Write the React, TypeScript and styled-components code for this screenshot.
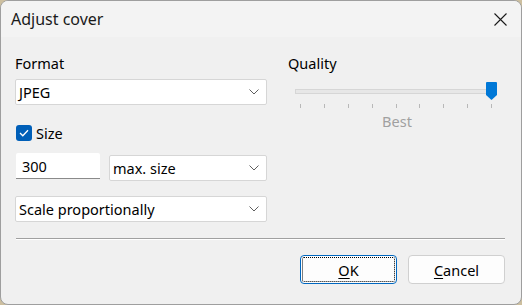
import React from "react";
import styled, { createGlobalStyle } from "styled-components";

const Global = createGlobalStyle`
  html, body { margin: 0; padding: 0; background: #cdbf9f; }
  body { font-family: "Noto Sans", "Open Sans", sans-serif; font-size: 14px; color: #000; }
  * { box-sizing: border-box; }
`;

const Window = styled.div`
  width: 522px;
  height: 305px;
  display: flex;
  flex-direction: column;
  background: #f0f0f0;
  border: 1px solid #9e9e9e;
  border-radius: 8px;
  overflow: hidden;
`;

const TitleBar = styled.div`
  height: 36px;
  flex: none;
  display: flex;
  align-items: center;
  justify-content: space-between;
  padding: 0 14px 0 10px;
  background: #f3f3f3;
`;

const Title = styled.div`
  font-size: 16px;
  color: #1a1a1a;
  margin-top: -1px;
`;

const Body = styled.div`
  flex: 1;
  display: flex;
  flex-direction: column;
  padding: 16px 16px 0 14px;
`;

const Columns = styled.div`
  display: grid;
  grid-template-columns: 252px 1fr;
  column-gap: 21px;
`;

const Column = styled.div`
  display: flex;
  flex-direction: column;
`;

const Label = styled.div`
  height: 20px;
  line-height: 20px;
  font-size: 14.5px;
`;

const SelectBox = styled.div<{ $mt?: number; $grow?: boolean }>`
  margin-top: ${(p) => p.$mt ?? 0}px;
  height: 26px;
  flex: ${(p) => (p.$grow ? "1 1 0" : "none")};
  background: #fff;
  border: 1px solid #d6d6d6;
  border-radius: 2px;
  display: flex;
  align-items: center;
  justify-content: space-between;
  padding: 0 7px 0 3px;
  font-size: 14.5px;
`;

const CheckRow = styled.div`
  margin-top: 19px;
  height: 17px;
  display: flex;
  align-items: center;
  gap: 4px;
  padding-left: 1px;
  font-size: 14.5px;
`;

const CheckBox = styled.div`
  width: 16px;
  height: 16px;
  border-radius: 3px;
  background: #005fb8;
  display: flex;
  align-items: center;
  justify-content: center;
`;

const SizeRow = styled.div`
  margin-top: 12px;
  display: flex;
  align-items: flex-start;
  gap: 9px;
  padding-left: 1px;
`;

const TextInput = styled.div`
  width: 84px;
  height: 26px;
  flex: none;
  background: #fff;
  border-bottom: 1px solid #8a8a8a;
  border-radius: 2px 2px 0 0;
  display: flex;
  align-items: center;
  padding-left: 6px;
  font-size: 14.5px;
`;

const SliderArea = styled.div`
  margin-top: 9px;
  padding: 0 8px 0 7px;
  display: flex;
  flex-direction: column;
`;

const TrackWrap = styled.div`
  position: relative;
  height: 18px;
  display: flex;
  align-items: center;
`;

const Track = styled.div`
  width: 100%;
  height: 5px;
  background: #e7e7e7;
  border: 1px solid #d6d6d6;
`;

const Thumb = styled.svg`
  position: absolute;
  right: 0;
  top: 0;
`;

const Ticks = styled.div`
  margin-top: 4px;
  height: 4px;
  display: flex;
  justify-content: space-between;
  padding: 0 5px 0 5px;
`;

const Tick = styled.div`
  width: 1px;
  height: 4px;
  background: #b8b8b8;
`;

const SliderCaption = styled.div`
  margin-top: 3px;
  text-align: center;
  color: #a0a0a0;
  font-size: 14.5px;
  line-height: 20px;
  padding-left: 2px;
`;

const Separator = styled.div`
  margin-top: 16px;
  margin-left: 1px;
  height: 2px;
  border-top: 1px solid #a0a0a0;
  border-bottom: 1px solid #ffffff;
`;

const ButtonRow = styled.div`
  margin-top: 15px;
  display: flex;
  justify-content: flex-end;
  gap: 11px;
`;

const Button = styled.div<{ $default?: boolean }>`
  width: 97px;
  height: 29px;
  background: #fdfdfd;
  border: 1px solid ${(p) => (p.$default ? "#0067c0" : "#d0d0d0")};
  border-radius: 4px;
  display: flex;
  align-items: center;
  justify-content: center;
  font-size: 14.5px;
  position: relative;
  ${(p) =>
    p.$default
      ? `&::after { content: ""; position: absolute; inset: 1px; border: 1px dotted #000; border-radius: 2px; }`
      : ""}
`;

const U = styled.span`
  text-decoration: underline;
  text-underline-offset: 2px;
`;

const Chevron = () => (
  <svg width="10" height="6" viewBox="0 0 10 6">
    <path d="M0.5 0.5 L5 5 L9.5 0.5" fill="none" stroke="#5f5f5f" strokeWidth="1" />
  </svg>
);

const Select: React.FC<{ text: string; mt?: number; grow?: boolean }> = ({ text, mt, grow }) => (
  <SelectBox $mt={mt} $grow={grow}>
    <span>{text}</span>
    <Chevron />
  </SelectBox>
);

export default function App() {
  return (
    <>
      <Global />
      <Window>
        <TitleBar>
          <Title>Adjust cover</Title>
          <svg width="13" height="13" viewBox="0 0 13 13">
            <path d="M0.5 0.5 L12.5 12.5 M12.5 0.5 L0.5 12.5" stroke="#1a1a1a" strokeWidth="1.1" />
          </svg>
        </TitleBar>
        <Body>
          <Columns>
            <Column>
              <Label>Format</Label>
              <Select text="JPEG" mt={6} />
              <CheckRow>
                <CheckBox>
                  <svg width="10" height="8" viewBox="0 0 10 8">
                    <path d="M1 4 L3.8 6.8 L9 1.2" fill="none" stroke="#fff" strokeWidth="1.3" />
                  </svg>
                </CheckBox>
                <span>Size</span>
              </CheckRow>
              <SizeRow>
                <TextInput>300</TextInput>
                <Select text="max. size" mt={2} grow />
              </SizeRow>
              <Select text="Scale proportionally" mt={15} />
            </Column>
            <Column>
              <Label>Quality</Label>
              <SliderArea>
                <TrackWrap>
                  <Track />
                  <Thumb width="11" height="18" viewBox="0 0 11 18">
                    <path d="M0 1 Q0 0 1 0 L10 0 Q11 0 11 1 L11 13 L5.5 18 L0 13 Z" fill="#0078d7" />
                  </Thumb>
                </TrackWrap>
                <Ticks>
                  {Array.from({ length: 9 }).map((_, i) => (
                    <Tick key={i} />
                  ))}
                </Ticks>
                <SliderCaption>Best</SliderCaption>
              </SliderArea>
            </Column>
          </Columns>
          <Separator />
          <ButtonRow>
            <Button $default>
              <span>
                <U>O</U>K
              </span>
            </Button>
            <Button>
              <span>
                <U>C</U>ancel
              </span>
            </Button>
          </ButtonRow>
        </Body>
      </Window>
    </>
  );
}
